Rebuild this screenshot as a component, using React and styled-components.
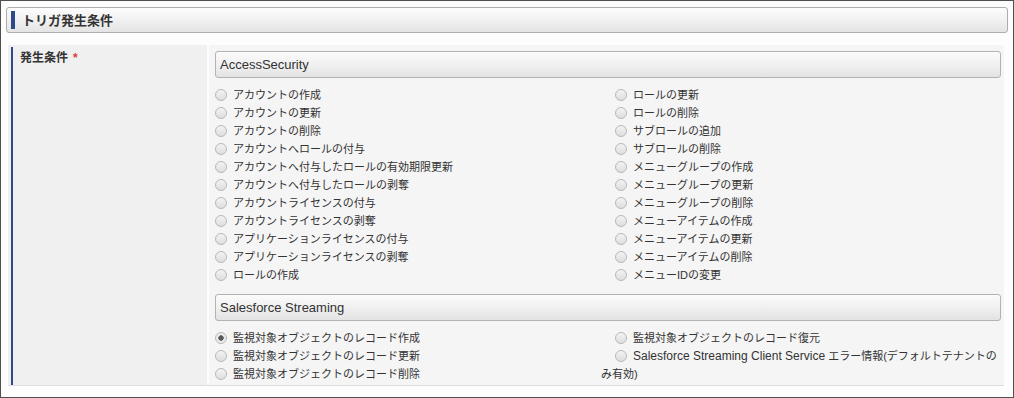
import React from "react";
import styled, { createGlobalStyle } from "styled-components";

const Global = createGlobalStyle`
  html, body { margin: 0; padding: 0; background: #ffffff; }
  body {
    font-family: "Liberation Sans", "Noto Sans CJK JP", sans-serif;
    font-size: 12px;
    color: #333;
  }
  * { box-sizing: border-box; }
`;

const Frame = styled.div`
  width: 1014px;
  height: 398px;
  border: 1px solid #4f4f4f;
  background: #fdfdfe;
  padding: 6px 5px 0 5px;
  overflow: hidden;
`;

const SectionHeader = styled.div`
  display: flex;
  align-items: center;
  height: 26px;
  border: 1px solid #aeaeae;
  border-radius: 3px;
  background: linear-gradient(to bottom, #fdfdfd 0%, #f1f1f1 50%, #e4e4e4 100%);
  padding-left: 4px;
`;

const AccentBar = styled.span`
  width: 4px;
  height: 18px;
  background: #2c4a8c;
  margin-right: 7px;
`;

const HeaderTitle = styled.h2`
  margin: 0;
  font-size: 13px;
  font-weight: bold;
  color: #333;
  line-height: 1;
`;

const FormRow = styled.div`
  display: grid;
  grid-template-columns: 199px 1fr;
  column-gap: 2px;
  margin: 12px 4px 0 2px;
  border-bottom: 1px solid #dedede;
`;

const LabelCell = styled.div`
  background: #f0f0f0;
  padding: 2px 0 0 3px;
  display: flex;
`;

const LabelInner = styled.div`
  flex: 1;
  border-left: 2px solid #2c4a8c;
  padding: 4px 0 0 7px;
  font-size: 12px;
  font-weight: bold;
  line-height: 14px;
  color: #333;
`;

const Required = styled.span`
  color: #e03a3a;
  margin-left: 5px;
  font-weight: bold;
`;

const ValueCell = styled.div`
  background: #f5f5f5;
  padding: 6px 3px 2px 6px;
`;

const GroupBox = styled.div`
  height: 27px;
  border: 1px solid #b2b2b2;
  border-radius: 3px;
  background: linear-gradient(to bottom, #fbfbfb 0%, #efefef 55%, #e3e3e3 100%);
  display: flex;
  align-items: center;
  padding-left: 4px;
  font-size: 13px;
  color: #333;
  margin-top: ${(p) => p.$top || 0}px;
`;

const RadioColumns = styled.div`
  display: grid;
  grid-template-columns: 386px 1fr;
  align-items: start;
  margin-top: ${(p) => p.$top}px;
`;

const RadioList = styled.div`
  display: flex;
  flex-direction: column;
`;

const RadioItem = styled.label`
  display: block;
  line-height: 18px;
  font-size: 11px;
  color: #333;
`;

const Latin = styled.span`
  font-size: 12px;
`;

const RadioDot = styled.span`
  display: inline-block;
  vertical-align: -2px;
  width: 12px;
  height: 12px;
  border-radius: 50%;
  border: 1px solid #b8b8b8;
  background: ${(p) =>
    p.$checked
      ? "radial-gradient(circle, #5a5a5a 0, #5a5a5a 2.4px, #e8e8e8 3px, #f8f8f8 100%)"
      : "linear-gradient(to bottom, #f3f3f3, #dedede)"};
  margin-left: ${(p) => (p.$indent ? 14 : 0)}px;
  margin-right: 6px;
`;

const Radio = ({ children, indent, checked }) => (
  <RadioItem>
    <RadioDot $indent={indent} $checked={checked} />
    {children}
  </RadioItem>
);

const accessLeft = [
  "アカウントの作成",
  "アカウントの更新",
  "アカウントの削除",
  "アカウントへロールの付与",
  "アカウントへ付与したロールの有効期限更新",
  "アカウントへ付与したロールの剥奪",
  "アカウントライセンスの付与",
  "アカウントライセンスの剥奪",
  "アプリケーションライセンスの付与",
  "アプリケーションライセンスの剥奪",
  "ロールの作成",
];

const accessRight = [
  "ロールの更新",
  "ロールの削除",
  "サブロールの追加",
  "サブロールの削除",
  "メニューグループの作成",
  "メニューグループの更新",
  "メニューグループの削除",
  "メニューアイテムの作成",
  "メニューアイテムの更新",
  "メニューアイテムの削除",
  "メニューIDの変更",
];

const sfLeft = [
  "監視対象オブジェクトのレコード作成",
  "監視対象オブジェクトのレコード更新",
  "監視対象オブジェクトのレコード削除",
];

export default function App() {
  return (
    <>
      <Global />
      <Frame>
        <SectionHeader>
          <AccentBar />
          <HeaderTitle>トリガ発生条件</HeaderTitle>
        </SectionHeader>
        <FormRow>
          <LabelCell>
            <LabelInner>
              発生条件<Required>*</Required>
            </LabelInner>
          </LabelCell>
          <ValueCell>
            <GroupBox>AccessSecurity</GroupBox>
            <RadioColumns $top={8}>
              <RadioList>
                {accessLeft.map((t) => (
                  <Radio key={t}>{t}</Radio>
                ))}
              </RadioList>
              <RadioList>
                {accessRight.map((t) => (
                  <Radio key={t} indent>
                    {t}
                  </Radio>
                ))}
              </RadioList>
            </RadioColumns>
            <GroupBox $top={10}>Salesforce Streaming</GroupBox>
            <RadioColumns $top={8}>
              <RadioList>
                {sfLeft.map((t, i) => (
                  <Radio key={t} checked={i === 0}>
                    {t}
                  </Radio>
                ))}
              </RadioList>
              <RadioList>
                <Radio indent>監視対象オブジェクトのレコード復元</Radio>
                <Radio indent>
                  <Latin>Salesforce Streaming Client Service</Latin> エラー情報(デフォルトテナントのみ有効)
                </Radio>
              </RadioList>
            </RadioColumns>
          </ValueCell>
        </FormRow>
      </Frame>
    </>
  );
}
